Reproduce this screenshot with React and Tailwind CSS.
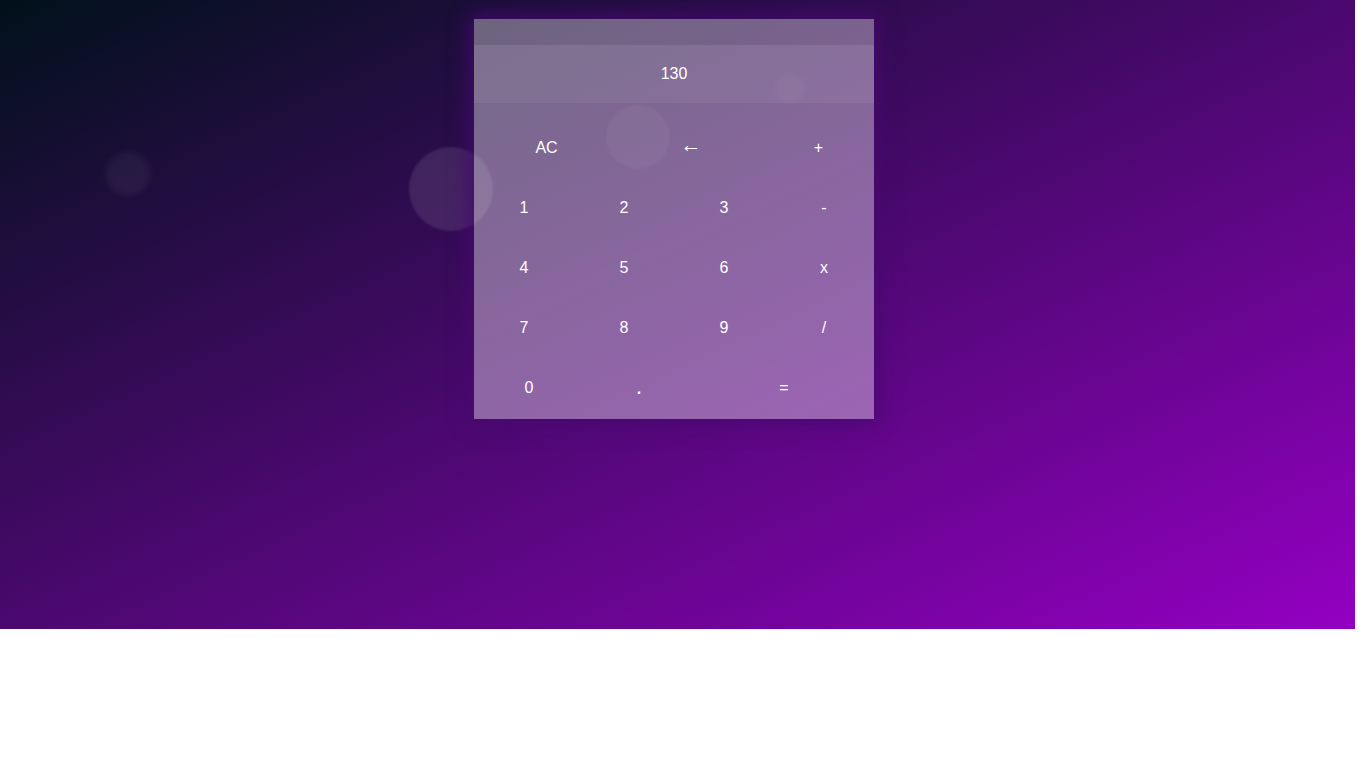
import { useState } from 'react'

const ROWS = [
  [
    { label: 'AC', w: 'w-[145px]' },
    { label: '←', w: 'w-[144px]', extra: 'text-[21px] pb-[6px]' },
    { label: '+', w: 'w-[111px]' },
  ],
  [
    { label: '1', w: 'w-[100px]' },
    { label: '2', w: 'w-[100px]' },
    { label: '3', w: 'w-[100px]' },
    { label: '-', w: 'w-[100px]' },
  ],
  [
    { label: '4', w: 'w-[100px]' },
    { label: '5', w: 'w-[100px]' },
    { label: '6', w: 'w-[100px]' },
    { label: 'x', w: 'w-[100px]' },
  ],
  [
    { label: '7', w: 'w-[100px]' },
    { label: '8', w: 'w-[100px]' },
    { label: '9', w: 'w-[100px]' },
    { label: '/', w: 'w-[100px]' },
  ],
  [
    { label: '0', w: 'w-[110px]' },
    { label: '.', w: 'w-[110px]', extra: 'font-bold pt-[2px]' },
    { label: '=', w: 'w-[180px]' },
  ],
]

export default function App() {
  const [value] = useState('130')

  return (
    <div className="w-[1355px] h-[629px] relative overflow-hidden bg-linear-to-br/srgb from-[#00111a] to-[#9400c2] font-['Liberation_Sans',Arial,sans-serif]">
      {/* bubbles */}
      <div className="absolute left-[106px] top-[152px] w-[44px] h-[44px] rounded-full bg-white/5 blur-[3px]" />
      <div className="absolute left-[409px] top-[147px] w-[84px] h-[84px] rounded-full bg-white/10 blur-[1px]" />

      <div className="pt-[19px] pl-[474px]">
        <div className="relative w-[400px] h-[400px] bg-white/[0.38] shadow-[0_0_18px_4px_rgba(70,10,110,0.9)] text-white">
          <div className="h-[26px] bg-black/[0.04]" />
          <div className="h-[58px] bg-white/[0.06] flex items-center justify-center text-base">
            {value}
          </div>
          <div className="pt-[15px]">
            {ROWS.map((row, i) => (
              <div key={i} className="flex h-[60px]">
                {row.map((b) => (
                  <button
                    key={b.label}
                    className={`${b.w} h-[60px] flex items-center justify-center text-base cursor-pointer ${b.extra || ''}`}
                  >
                    {b.label}
                  </button>
                ))}
              </div>
            ))}
          </div>

          <div className="absolute left-[132px] top-[86px] w-[64px] h-[64px] rounded-full bg-white/[0.045] blur-[1px] pointer-events-none" />
          <div className="absolute left-[301px] top-[54px] w-[30px] h-[30px] rounded-full bg-white/[0.035] blur-[2px] pointer-events-none" />
        </div>
      </div>
    </div>
  )
}
